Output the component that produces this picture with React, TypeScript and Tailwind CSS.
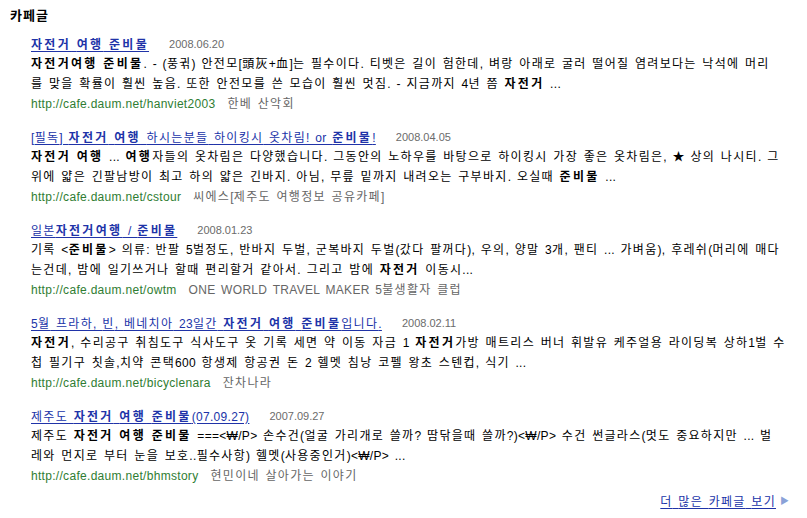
import React from 'react'

type Seg = { t: string; b?: boolean }

interface Item {
  title: Seg[]
  date: string
  lines: Seg[][]
  url: string
  cafe: string
}

const items: Item[] = [
  {
    title: [{ t: '자전거 여행 준비물', b: true }],
    date: '2008.06.20',
    lines: [
      [
        { t: '자전거여행 준비물', b: true },
        { t: '. - (풍귂) 안전모[頭灰+血]는 필수이다. 티벳은 길이 험한데, 벼랑 아래로 굴러 떨어질 염려보다는 낙석에 머리' },
      ],
      [
        { t: '를 맞을 확률이 훨씬 높음. 또한 안전모를 쓴 모습이 훨씬 멋짐. - 지금까지 4년 쯤 ' },
        { t: '자전거', b: true },
        { t: ' ...' },
      ],
    ],
    url: 'http://cafe.daum.net/hanviet2003',
    cafe: '한베 산악회',
  },
  {
    title: [
      { t: '[필독] ' },
      { t: '자전거 여행', b: true },
      { t: ' 하시는분들 하이킹시 옷차림! or ' },
      { t: '준비물', b: true },
      { t: '!' },
    ],
    date: '2008.04.05',
    lines: [
      [
        { t: '자전거 여행', b: true },
        { t: ' ... ' },
        { t: '여행', b: true },
        { t: '자들의 옷차림은 다양했습니다. 그동안의 노하우를 바탕으로 하이킹시 가장 좋은 옷차림은, ★ 상의 나시티. 그' },
      ],
      [
        { t: '위에 얇은 긴팔남방이 최고 하의 얇은 긴바지. 아님, 무릎 밑까지 내려오는 구부바지. 오실때 ' },
        { t: '준비물', b: true },
        { t: ' ...' },
      ],
    ],
    url: 'http://cafe.daum.net/cstour',
    cafe: '씨에스[제주도 여행정보 공유카페]',
  },
  {
    title: [
      { t: '일본' },
      { t: '자전거여행', b: true },
      { t: ' / ' },
      { t: '준비물', b: true },
    ],
    date: '2008.01.23',
    lines: [
      [
        { t: '기록 <' },
        { t: '준비물', b: true },
        { t: '> 의류: 반팔 5벌정도, 반바지 두벌, 군복바지 두벌(갔다 팔꺼다), 우의, 양말 3개, 팬티 ... 가벼움), 후레쉬(머리에 매다' },
      ],
      [
        { t: '는건데, 밤에 일기쓰거나 할때 편리할거 같아서. 그리고 밤에 ' },
        { t: '자전거', b: true },
        { t: ' 이동시...' },
      ],
    ],
    url: 'http://cafe.daum.net/owtm',
    cafe: 'ONE WORLD TRAVEL MAKER 5불생활자 클럽',
  },
  {
    title: [
      { t: '5월 프라하, 빈, 베네치아 23일간 ' },
      { t: '자전거 여행 준비물', b: true },
      { t: '입니다.' },
    ],
    date: '2008.02.11',
    lines: [
      [
        { t: '자전거', b: true },
        { t: ', 수리공구 취침도구 식사도구 옷 기록 세면 약 이동 자금 1 ' },
        { t: '자전거', b: true },
        { t: '가방 매트리스 버너 휘발유 케주얼용 라이딩복 상하1벌 수' },
      ],
      [{ t: '첩 필기구 칫솔,치약 콘택600 항생제 항공권 돈 2 헬멧 침낭 코펠 왕초 스텐컵, 식기 ...' }],
    ],
    url: 'http://cafe.daum.net/bicyclenara',
    cafe: '잔차나라',
  },
  {
    title: [
      { t: '제주도 ' },
      { t: '자전거 여행 준비물', b: true },
      { t: '(07.09.27)' },
    ],
    date: '2007.09.27',
    lines: [
      [
        { t: '제주도 ' },
        { t: '자전거 여행 준비물', b: true },
        { t: ' ===<₩/P> 손수건(얼굴 가리개로 쓸까? 땀닦을때 쓸까?)<₩/P> 수건 썬글라스(멋도 중요하지만 ... 벌' },
      ],
      [{ t: '레와 먼지로 부터 눈을 보호..필수사항) 헬멧(사용중인거)<₩/P> ...' }],
    ],
    url: 'http://cafe.daum.net/bhmstory',
    cafe: '현민이네 살아가는 이야기',
  },
]

// hangul runs get a bit more tracking than latin to mimic the old bitmap font widths
const KO = /([\uAC00-\uD7A3\u3130-\u318F\u4E00-\u9FFF]+)/

const Txt = ({ t, b }: { t: string; b?: boolean }) => (
  <>
    {t.split(KO).map((p, i) =>
      p === '' ? null : (
        <span
          key={i}
          className={KO.test(p) ? (b ? 'tracking-[2.3px]' : 'tracking-[1.3px]') : 'tracking-[0.3px]'}
        >
          {p}
        </span>
      ),
    )}
  </>
)

const Segs = ({ segs }: { segs: Seg[] }) => (
  <>
    {segs.map((s, i) => (
      <span key={i} className={s.b ? 'font-bold' : ''}>
        <Txt t={s.t} b={s.b} />
      </span>
    ))}
  </>
)

const Result = ({ item }: { item: Item }) => (
  <li className="flex flex-col">
    <div className="flex items-center h-[19px]">
      <a href="#" className="text-[#2033a8] underline underline-offset-2 text-[12px] whitespace-nowrap">
        <Segs segs={item.title} />
      </a>
      <span className="ml-5 text-[11px] text-[#6b6b6b] [word-spacing:0px]">{item.date}</span>
    </div>
    {item.lines.map((l, i) => (
      <p key={i} className="h-[20px] leading-[20px] text-[12px] text-black whitespace-nowrap">
        <Segs segs={l} />
      </p>
    ))}
    <div className="h-[20px] leading-[20px] text-[12px] whitespace-nowrap">
      <span className="text-[#2f7d32]">
        <Txt t={item.url} />
      </span>
      <span className="ml-3 text-[#666]">
        <Txt t={item.cafe} />
      </span>
    </div>
  </li>
)

export default function App() {
  return (
    <div
      className="w-[807px] h-[518px] bg-white pl-[10px] pt-[8px] overflow-hidden [word-spacing:2px]"
      style={{ fontFamily: '"Liberation Sans", "Noto Sans CJK KR", sans-serif' }}
    >
      <h2 className="text-[13px] font-bold text-black leading-[16px] tracking-[1px]">카페글</h2>
      <ul className="mt-[11px] ml-[21px] flex flex-col gap-[14px]">
        {items.map((it, i) => (
          <Result key={i} item={it} />
        ))}
      </ul>
      <div className="flex justify-end items-center h-[20px] pr-[18px] mt-[6px]">
        <a href="#" className="text-[12px] text-[#2033a8] underline underline-offset-2">
          <Txt t="더 많은 카페글 보기" />
        </a>
        <span className="ml-1 text-[9px] text-[#8aa2d8]">▶</span>
      </div>
    </div>
  )
}
